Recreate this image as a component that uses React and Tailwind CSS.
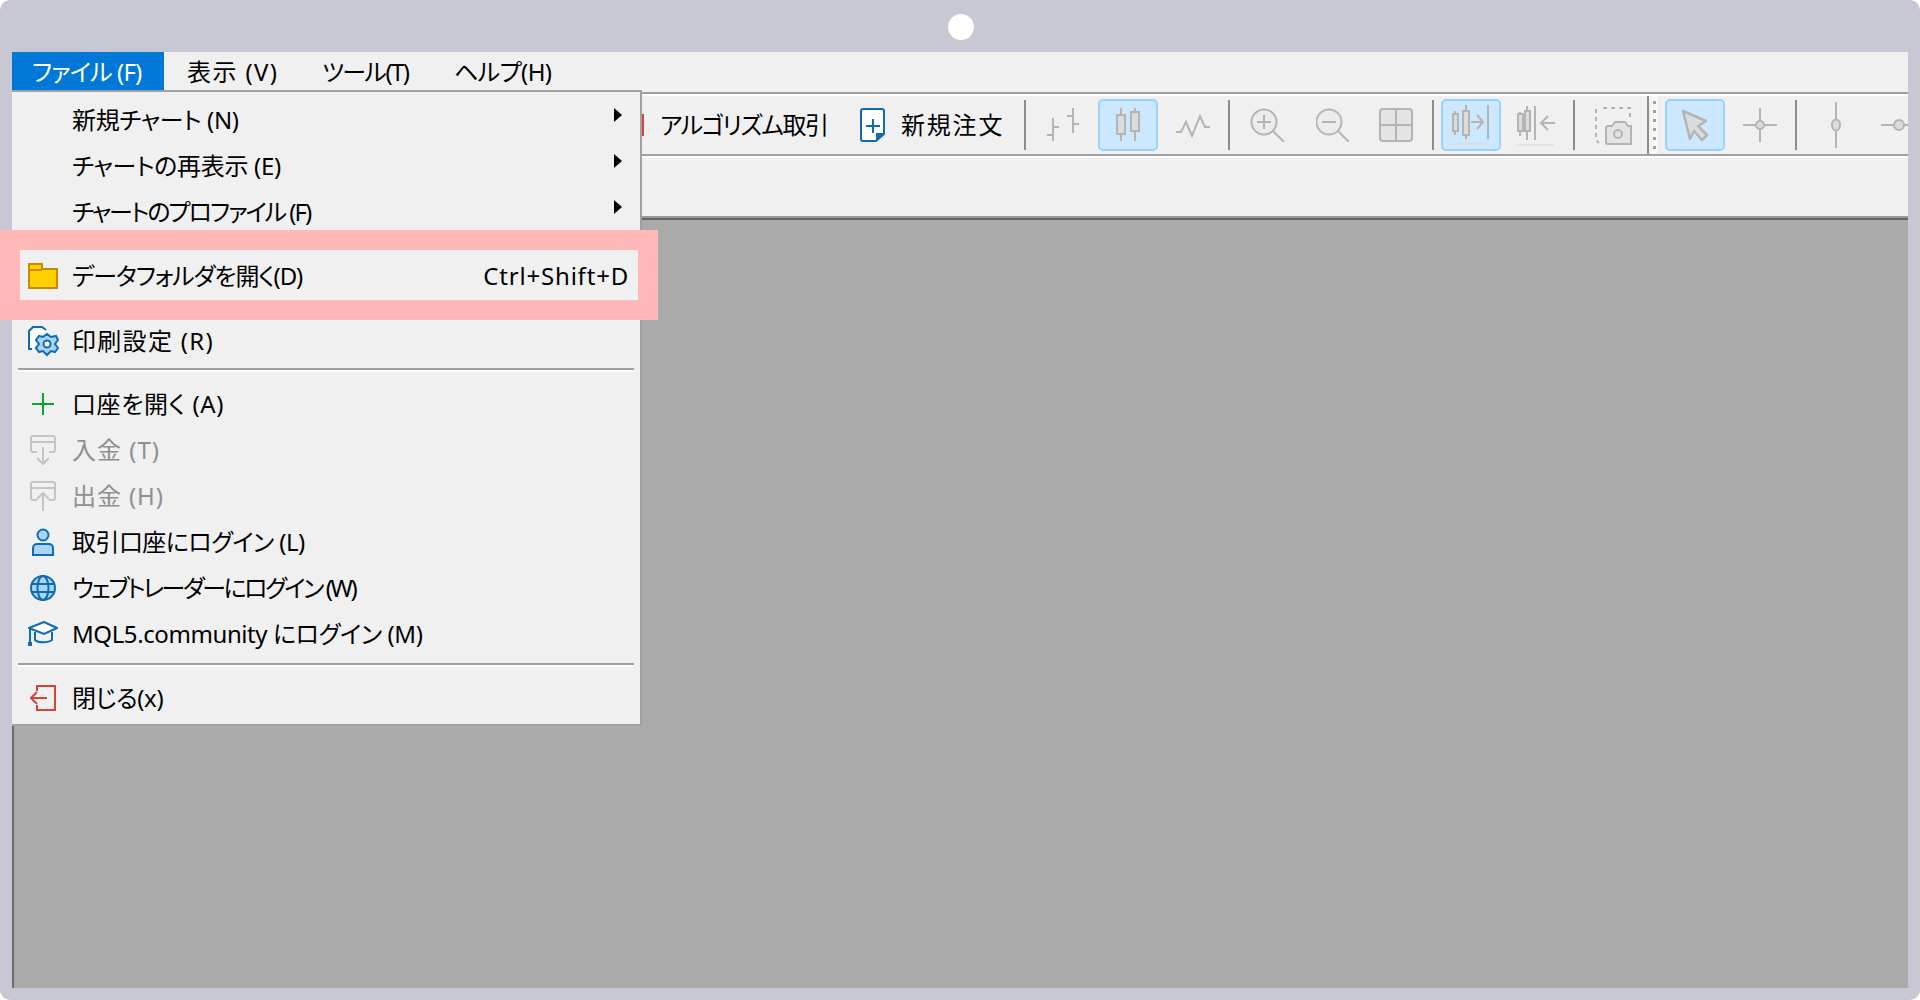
const FONT = "font-['Noto_Sans','Noto_Sans_CJK_JP',sans-serif] [font-feature-settings:'palt']";
const G = "#b4b4b4";

function Svg({ w, h = 34, children, className = "" }) {
  return (
    <svg width={w} height={h} viewBox={`0 0 ${w} ${h}`} fill="none" className={"shrink-0 " + className}>
      {children}
    </svg>
  );
}

function Sep({ className = "" }) {
  return <div className={`w-[2px] h-[50px] bg-[#8c8c8c] shrink-0 ${className}`} />;
}

function Hot({ className = "", children }) {
  return (
    <div className={`w-[60px] h-[52px] shrink-0 flex items-center justify-center rounded-[5px] bg-[#cce8ff] border-2 border-[#99d1ff] ${className}`}>
      {children}
    </div>
  );
}

function Toolbar() {
  return (
    <div className="flex items-center h-[58px] pl-[628px] overflow-hidden bg-[#f0f0f0]">
      <div className="w-[4px] h-[22px] bg-[#d9413b] shrink-0" />
      <span className="ml-[16px] text-[24px] leading-none whitespace-nowrap text-black shrink-0 w-[164px] tracking-[-1.4px]">アルゴリズム取引</span>
      <Svg w={25} className="ml-[36px]">
        <path d="M3 1H22a2 2 0 0 1 2 2V26L16 33H3a2 2 0 0 1-2-2V3a2 2 0 0 1 2-2Z" fill="#fff" stroke="#0f6cb0" strokeWidth="2" />
        <path d="M24 25L16 33V25Z" fill="#0f6cb0" />
        <path d="M13 11V25M6 18H20" stroke="#0f6cb0" strokeWidth="2" />
      </Svg>
      <span className="ml-[16px] text-[24px] leading-none whitespace-nowrap text-black shrink-0 w-[102px] tracking-[1.8px]">新規注文</span>
      <Sep className="ml-[21px]" />
      <Svg w={35} className="ml-[20px]">
        <path d="M7 10V33M1 27H7M7 19H13M27 0V25M21 8H27M27 16H33" stroke={G} strokeWidth="2" />
      </Svg>
      <Hot className="ml-[17px]">
        <Svg w={26}>
          <path d="M6 0V33M20 0V33" stroke={G} strokeWidth="2" />
          <rect x="2" y="7" width="8" height="19" fill="#dcdcdc" stroke={G} strokeWidth="2" />
          <rect x="16" y="4" width="8" height="19" fill="#dcdcdc" stroke={G} strokeWidth="2" />
        </Svg>
      </Hot>
      <Svg w={34} className="ml-[18px]">
        <path d="M0 24H5L10 14L16 28L24 8L29 19H34" stroke={G} strokeWidth="2" />
      </Svg>
      <Sep className="ml-[18px]" />
      <Svg w={35} className="ml-[20px]">
        <circle cx="14" cy="14" r="12.5" fill="#ececec" stroke={G} strokeWidth="2" />
        <path d="M14 7V21M7 14H21M23 23L34 34" stroke={G} strokeWidth="2" />
      </Svg>
      <Svg w={33} className="ml-[31px]">
        <circle cx="13" cy="14" r="12.5" fill="#ececec" stroke={G} strokeWidth="2" />
        <path d="M6 14H20M22 23L33 34" stroke={G} strokeWidth="2" />
      </Svg>
      <Svg w={34} className="ml-[30px]">
        <rect x="1" y="1" width="32" height="32" rx="3" fill="#e4e4e4" stroke={G} strokeWidth="2" />
        <path d="M17 1V33M1 17H33" stroke={G} strokeWidth="2" />
      </Svg>
      <Sep className="ml-[19px]" />
      <Hot className="ml-[7px]">
        <Svg w={38} h={40}>
          <path d="M3 6V30M14 0V34M36 0V34" stroke={G} strokeWidth="2" />
          <rect x="1" y="9" width="5" height="17" fill="#dcdcdc" stroke={G} strokeWidth="2" />
          <rect x="11" y="6" width="6" height="24" fill="#dcdcdc" stroke={G} strokeWidth="2" />
          <path d="M19 17H31M25 10L31 17L25 24" stroke={G} strokeWidth="2" />
          <path d="M0 39H37" stroke="#dcdcdc" strokeWidth="2" />
        </Svg>
      </Hot>
      <Svg w={38} h={40} className="ml-[16px] mt-[2px]">
        <path d="M3 6V30M10 0V34M18 0V34" stroke={G} strokeWidth="2" />
        <rect x="1" y="8" width="5" height="17" fill="#dcdcdc" stroke={G} strokeWidth="2" />
        <rect x="8" y="5" width="5" height="20" fill="#dcdcdc" stroke={G} strokeWidth="2" />
        <path d="M38 17H24M31 10L24 17L31 24" stroke={G} strokeWidth="2" />
        <path d="M0 39H37" stroke="#e4e4e4" strokeWidth="2" />
      </Svg>
      <Sep className="ml-[18px]" />
      <Svg w={37} h={38} className="ml-[20px] mt-[2px]">
        <path d="M1 22V3H4M8 1H35V14M1 26V33L4 36" stroke={G} strokeWidth="2" strokeDasharray="4 4" />
        <path d="M11 36V21a2 2 0 0 1 2-2H17L20 15H30L33 19H36V37H12Z" fill="#e4e4e4" stroke={G} strokeWidth="2" />
        <circle cx="23" cy="27" r="4" stroke={G} strokeWidth="2" />
      </Svg>
      <div className="ml-[15px] w-[2px] self-stretch bg-[#8c8c8c] shrink-0" />
      <div className="ml-[2px] w-[7px] self-stretch bg-[#f8f8f8] flex flex-col items-center justify-center gap-[6px] shrink-0">
        {[0, 1, 2, 3, 4, 5].map((i) => (
          <div key={i} className="w-[3px] h-[3px] bg-[#a0a0a0]" />
        ))}
      </div>
      <Hot className="ml-[7px]">
        <Svg w={30}>
          <path d="M3 3L26 13L18 18L27 27L22 32L14 23L10 31Z" fill="#dcdcdc" stroke={G} strokeWidth="2.5" strokeLinejoin="round" />
        </Svg>
      </Hot>
      <Svg w={34} className="ml-[18px]">
        <path d="M17 0V13M17 21V34M0 17H13M21 17H34" stroke={G} strokeWidth="2" />
        <circle cx="17" cy="17" r="4" fill="#dcdcdc" stroke={G} strokeWidth="2" />
      </Svg>
      <Sep className="ml-[18px]" />
      <Svg w={20} h={46} className="ml-[29px]">
        <path d="M10 0V17M10 29V46" stroke={G} strokeWidth="2" />
        <ellipse cx="10" cy="23" rx="4" ry="5.5" fill="#dcdcdc" stroke={G} strokeWidth="2" />
      </Svg>
      <Svg w={34} className="ml-[35px]">
        <path d="M0 17H12M22 17H34" stroke={G} strokeWidth="2" />
        <circle cx="18" cy="17" r="5" fill="#dcdcdc" stroke={G} strokeWidth="2" />
      </Svg>
    </div>
  );
}

function Arrow() {
  return (
    <svg width="8" height="14" viewBox="0 0 8 14" className="shrink-0 mr-[18px] -mt-[10px]">
      <path d="M0 0L8 7L0 14Z" fill="#000" />
    </svg>
  );
}

function Row({ icon, label, arrow, disabled, shortcut, tracking = "" }) {
  return (
    <div className="flex items-center h-[46px] pl-[14px]">
      <div className="w-[34px] h-[34px] flex items-center justify-center shrink-0">{icon}</div>
      <span className={`ml-[12px] text-[24px] leading-none whitespace-nowrap ${tracking} ${disabled ? "text-[#8f8f8f]" : "text-black"}`}>
        {label}
      </span>
      {arrow && <div className="ml-auto"><Arrow /></div>}
      {shortcut && <span className="ml-auto mr-[11px] text-[24px] leading-none whitespace-nowrap text-black tracking-[0.8px]">{shortcut}</span>}
    </div>
  );
}

const B = "#0f6cb0";

const Icons = {
  folder: (
    <svg width="30" height="26" viewBox="0 0 30 26">
      <path d="M1 1H14V6H29V25H1Z" fill="#ffd000" stroke="#c98a00" strokeWidth="2" />
      <path d="M1 7H14" stroke="#c98a00" strokeWidth="2" />
    </svg>
  ),
  print: (
    <svg width="32" height="32" viewBox="0 0 32 32" fill="none">
      <path d="M5 24H2V6L6 2H15L19 5" stroke={B} strokeWidth="2" fill="#fff" />
      <path d="M20 9L24 12L29 11L31 15L28 19L31 23L28 27L24 26L20 30L16 26L12 27L9 23L12 19L9 15L12 11L16 12Z" fill="#a9d4f5" stroke={B} strokeWidth="2" />
      <circle cx="20" cy="19" r="3.5" fill="#fff" stroke={B} strokeWidth="2" />
    </svg>
  ),
  plus: (
    <svg width="24" height="24" viewBox="0 0 24 24">
      <path d="M12 1V23M1 12H23" stroke="#0aa52a" strokeWidth="2" />
    </svg>
  ),
  down: (
    <svg width="26" height="30" viewBox="0 0 26 30" fill="none">
      <path d="M7 17H3a2 2 0 0 1-2-2V3a2 2 0 0 1 2-2H23a2 2 0 0 1 2 2V15a2 2 0 0 1-2 2H19M1 7H25M13 12V29M7 23L13 29L19 23" stroke="#c4c4c4" strokeWidth="2" />
    </svg>
  ),
  up: (
    <svg width="26" height="30" viewBox="0 0 26 30" fill="none">
      <path d="M7 19H3a2 2 0 0 1-2-2V3a2 2 0 0 1 2-2H23a2 2 0 0 1 2 2V17a2 2 0 0 1-2 2H19M1 7H25M13 30V12M7 18L13 12L19 18" stroke="#c4c4c4" strokeWidth="2" />
    </svg>
  ),
  user: (
    <svg width="22" height="28" viewBox="0 0 22 28" fill="none">
      <circle cx="11" cy="7" r="5.5" fill="#a9d4f5" stroke={B} strokeWidth="2" />
      <path d="M1 27V20a4 4 0 0 1 4-4H17a4 4 0 0 1 4 4V27Z" fill="#a9d4f5" stroke={B} strokeWidth="2" />
    </svg>
  ),
  globe: (
    <svg width="26" height="26" viewBox="0 0 26 26" fill="none">
      <circle cx="13" cy="13" r="12" fill="#a9d4f5" stroke={B} strokeWidth="2" />
      <ellipse cx="13" cy="13" rx="5.5" ry="12" stroke={B} strokeWidth="2" />
      <path d="M2 9H24M2 17H24" stroke={B} strokeWidth="2" />
    </svg>
  ),
  cap: (
    <svg width="30" height="26" viewBox="0 0 30 26" fill="none">
      <path d="M1 7L16 1L29 7L16 13Z" fill="#fff" stroke={B} strokeWidth="2" />
      <path d="M7 11V19C10 22 20 22 24 19V11" stroke={B} strokeWidth="2" />
      <path d="M2 8V22" stroke={B} strokeWidth="2" />
      <rect x="0" y="21" width="4" height="4" fill={B} />
    </svg>
  ),
  exit: (
    <svg width="26" height="26" viewBox="0 0 26 26" fill="none">
      <path d="M7 6V1H25V25H7V20M1 13H17M7 7L1 13L7 19" stroke="#d9413b" strokeWidth="2" />
    </svg>
  ),
};

function Divider({ className }) {
  return (
    <div className={`ml-[6px] mr-[6px] ${className}`}>
      <div className="h-[2px] bg-[#a0a0a0]" />
      <div className="h-[2px] bg-white" />
    </div>
  );
}

function Menu() {
  return (
    <div className={`absolute left-0 top-[38px] w-[630px] bg-[#f0f0f0] border-r-2 border-t-2 border-b-2 border-[#a0a0a0] pt-[5px] pb-[3px] ${FONT}`}>
      <Row label="新規チャート (N)" arrow tracking="tracking-[-0.37px]" />
      <Row label="チャートの再表示 (E)" arrow tracking="tracking-[-0.3px]" />
      <Row label="チャートのプロファイル (F)" arrow tracking="tracking-[-2px]" />
      <div className="h-[18px]" />
      <div className="relative">
        <div className="absolute left-[-12px] right-[-18px] top-[-23px] bottom-[-21px] border-[20px] border-[#ffb8b8] pointer-events-none" />
        <Row label="データフォルダを開く(D)" shortcut="Ctrl+Shift+D" icon={Icons.folder} tracking="tracking-[-1.13px]" />
      </div>
      <div className="h-[19px]" />
      <Row label="印刷設定 (R)" icon={Icons.print} tracking="tracking-[1.3px]" />
      <Divider className="pt-[4px] pb-[9px]" />
      <Row label="口座を開く (A)" icon={Icons.plus} tracking="tracking-[0.6px]" />
      <Row label="入金 (T)" icon={Icons.down} disabled tracking="tracking-[1px]" />
      <Row label="出金 (H)" icon={Icons.up} disabled tracking="tracking-[0.9px]" />
      <Row label="取引口座にログイン (L)" icon={Icons.user} tracking="tracking-[-0.56px]" />
      <Row label="ウェブトレーダーにログイン (W)" icon={Icons.globe} tracking="tracking-[-2.45px]" />
      <Row label="MQL5.community にログイン (M)" icon={Icons.cap} tracking="tracking-[-0.41px]" />
      <Divider className="pt-[6px] pb-[8px]" />
      <Row label="閉じる(x)" icon={Icons.exit} tracking="tracking-[-0.4px]" />
    </div>
  );
}

export default function App() {
  return (
    <div className={`w-[1920px] h-[1000px] bg-white ${FONT}`}>
      <div className="w-full h-full rounded-[10px] bg-[#c8c8d4] flex flex-col pt-[14px] px-[12px] pb-[12px]">
        <div className="h-[26px] w-[26px] rounded-full bg-white self-center shrink-0 mr-[-2px]" />
        <div className="mt-[12px] flex-1 flex flex-col relative min-h-0">
          <div className="h-[40px] shrink-0 bg-[#f0f0f0] flex items-stretch text-[24px] leading-none text-black">
            <div className="w-[152px] h-[38px] pt-[2px] bg-[#0078d7] text-white flex items-center pl-[20px] whitespace-nowrap tracking-[-0.85px]">ファイル (F)</div>
            <div className="ml-[23px] w-[92px] h-[38px] pt-[2px] flex items-center whitespace-nowrap tracking-[1.4px]">表示 (V)</div>
            <div className="ml-[43px] w-[87px] h-[38px] pt-[2px] flex items-center whitespace-nowrap tracking-[-1.6px]">ツール(T)</div>
            <div className="ml-[45px] h-[38px] pt-[2px] flex items-center whitespace-nowrap tracking-[-0.6px]">ヘルプ(H)</div>
          </div>
          <div className="h-[2px] bg-[#a0a0a0] shrink-0" />
          <div className="h-[2px] bg-white shrink-0" />
          <Toolbar />
          <div className="h-[2px] bg-[#a0a0a0] shrink-0" />
          <div className="h-[2px] bg-white shrink-0" />
          <div className="h-[58px] bg-[#f0f0f0] shrink-0" />
          <div className="h-[2px] bg-[#999999] shrink-0" />
          <div className="h-[2px] bg-[#666666] shrink-0" />
          <div className="flex-1 bg-[#aaaaaa] border-l-2 border-[#6d6d6d]" />
          <Menu />
        </div>
      </div>
    </div>
  );
}
